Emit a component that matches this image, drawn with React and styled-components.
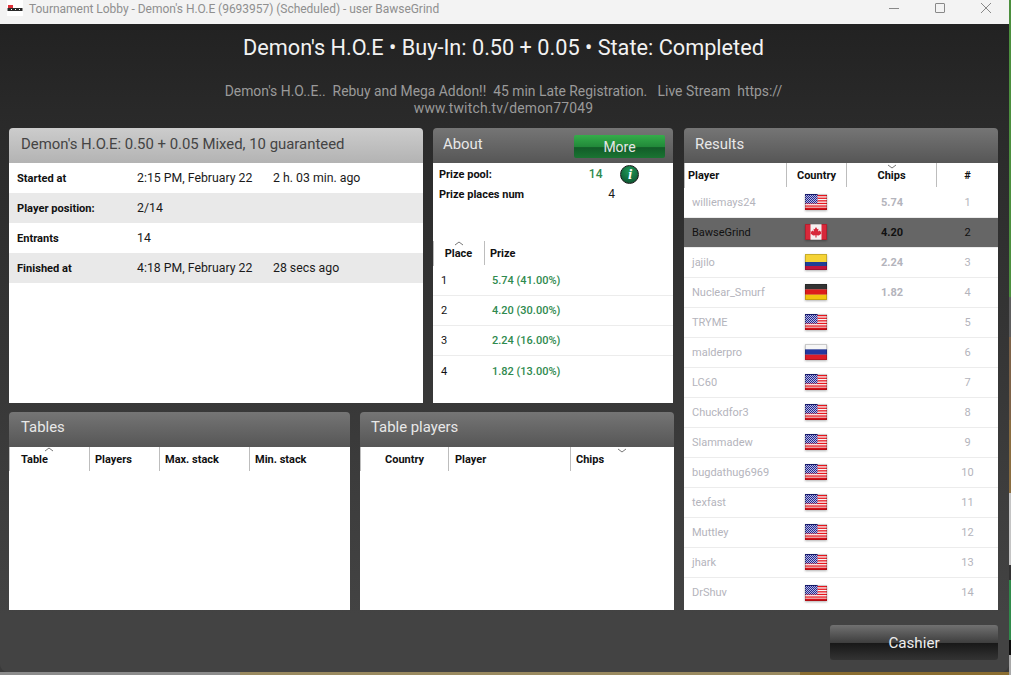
import React from "react";
import styled, { createGlobalStyle } from "styled-components";

const GlobalStyle = createGlobalStyle`
  html, body {
    margin: 0;
    padding: 0;
    background: #3a3a3a;
  }
  body {
    font-family: Roboto, "Liberation Sans", sans-serif;
  }
  * {
    box-sizing: border-box;
  }
`;

const results = [
  { name: "williemays24", flag: "us", chips: "5.74" },
  { name: "BawseGrind", flag: "ca", chips: "4.20", me: true },
  { name: "jajilo", flag: "co", chips: "2.24" },
  { name: "Nuclear_Smurf", flag: "de", chips: "1.82" },
  { name: "TRYME", flag: "us" },
  { name: "malderpro", flag: "ru" },
  { name: "LC60", flag: "us" },
  { name: "Chuckdfor3", flag: "us" },
  { name: "Slammadew", flag: "us" },
  { name: "bugdathug6969", flag: "us" },
  { name: "texfast", flag: "us" },
  { name: "Muttley", flag: "us" },
  { name: "jhark", flag: "us" },
  { name: "DrShuv", flag: "us" },
];

const prizes = [
  { place: 1, prize: "5.74 (41.00%)" },
  { place: 2, prize: "4.20 (30.00%)" },
  { place: 3, prize: "2.24 (16.00%)" },
  { place: 4, prize: "1.82 (13.00%)" },
];

function Flag({ code }) {
  return (
    <FlagBox viewBox="0 0 22 16">
      {code === "us" && (
        <>
          <defs>
            <pattern id="usStars" width="2" height="2" patternUnits="userSpaceOnUse">
              <rect width="2" height="2" fill="#24288f" />
              <rect width="1" height="1" fill="#b9bbe4" />
              <rect x="1" y="1" width="1" height="1" fill="#b9bbe4" />
            </pattern>
          </defs>
          <rect width="22" height="16" fill="#f8f8f8" />
          <rect y="1" width="22" height="1.3" fill="#e8141c" />
          <rect y="3.6" width="22" height="1.3" fill="#e8141c" />
          <rect y="6.2" width="22" height="1.3" fill="#e8141c" />
          <rect y="8.8" width="22" height="1.3" fill="#e8141c" />
          <rect y="11.4" width="22" height="1.3" fill="#e8141c" />
          <rect y="13.6" width="22" height="2.4" fill="#d80f18" />
          <rect width="12.5" height="9.6" fill="url(#usStars)" />
          <rect x="0" y="0" width="12.5" height="1" fill="#1c2080" />
        </>
      )}
      {code === "ca" && (
        <>
          <rect width="22" height="16" fill="#f6f0f0" />
          <rect width="5.5" height="16" fill="#d8283a" />
          <rect x="16.5" width="5.5" height="16" fill="#d8283a" />
          <path d="M11 3l1.3 2.2 1.2-.5-.4 2.8 1.6-1 .4 1 1.4-.2-.5 1.6.6.5-2.8 2.2-2.3-.3.1 2.2h-1.2l.1-2.2-2.3.3-2.8-2.2.6-.5-.5-1.6 1.4.2.4-1 1.6 1-.4-2.8 1.2.5z" fill="#d8283a" />
        </>
      )}
      {code === "co" && (
        <>
          <rect width="22" height="8" fill="#f5d335" />
          <rect y="8" width="22" height="4" fill="#1f3f96" />
          <rect y="12" width="22" height="4" fill="#c0143c" />
        </>
      )}
      {code === "de" && (
        <>
          <rect width="22" height="5.4" fill="#333333" />
          <rect y="5.4" width="22" height="5.3" fill="#dd1c1c" />
          <rect y="10.7" width="22" height="5.3" fill="#f1c40f" />
        </>
      )}
      {code === "ru" && (
        <>
          <rect width="22" height="5.4" fill="#f6f6f6" />
          <rect y="5.4" width="22" height="5.3" fill="#2438a0" />
          <rect y="10.7" width="22" height="5.3" fill="#dc1c28" />
        </>
      )}
      <rect x="0.5" y="0.5" width="21" height="15" fill="none" stroke="#000000" strokeOpacity="0.18" />
    </FlagBox>
  );
}

function SortMark({ down, left }) {
  return (
    <SortIcon viewBox="0 0 10 5" $left={left} $down={down}>
      <path d={down ? "M1 1l4 3 4-3" : "M1 4l4-3 4 3"} />
    </SortIcon>
  );
}

function AppLogo() {
  return (
    <LogoBox viewBox="0 0 16 16">
      <rect width="16" height="16" fill="#ffffff" />
      <rect x="1" y="5" width="5" height="3" fill="#e0343c" />
      <rect x="0.5" y="8" width="15" height="3" fill="#2a2a2a" />
      <rect x="4" y="9" width="1" height="1" fill="#ffffff" />
      <rect x="8" y="9" width="1" height="1" fill="#ffffff" />
      <rect x="12" y="9" width="1" height="1" fill="#ffffff" />
    </LogoBox>
  );
}

export default function App() {
  return (
    <>
      <GlobalStyle />
      <Page>
        <TitleBar>
          <TitleLeft>
            <AppLogo />
            <TitleText>
              Tournament Lobby - Demon's H.O.E (9693957) (Scheduled) - user BawseGrind
            </TitleText>
          </TitleLeft>
          <WindowButtons>
            <WinIcon viewBox="0 0 12 12">
              <path d="M1 6.5h10" />
            </WinIcon>
            <WinIcon viewBox="0 0 12 12">
              <rect x="1.5" y="1.5" width="9" height="9" rx="0.5" />
            </WinIcon>
            <WinIcon viewBox="0 0 12 12">
              <path d="M1 1l10 10M11 1L1 11" />
            </WinIcon>
          </WindowButtons>
        </TitleBar>
        <Body>
          <Heading>Demon's H.O.E • Buy-In: 0.50 + 0.05 • State: Completed</Heading>
          <Description>
            Demon's H.O..E.. &nbsp;Rebuy and Mega Addon!! &nbsp;45 min Late Registration. &nbsp; Live Stream &nbsp;https://
            <br />
            <LinkLine>www.twitch.tv/demon77049</LinkLine>
          </Description>
          <Panels>
            <LeftArea>
              <TopRow>
                <Panel>
                  <PanelHeader $light $pad="12px">
                    Demon's H.O.E: 0.50 + 0.05 Mixed, 10 guaranteed
                  </PanelHeader>
                  <PanelBody>
                    <InfoRow>
                      <InfoLabel>Started at</InfoLabel>
                      <InfoValue>2:15 PM, February 22</InfoValue>
                      <InfoValue>2 h. 03 min. ago</InfoValue>
                    </InfoRow>
                    <InfoRow $shaded>
                      <InfoLabel>Player position:</InfoLabel>
                      <InfoValue>2/14</InfoValue>
                    </InfoRow>
                    <InfoRow>
                      <InfoLabel>Entrants</InfoLabel>
                      <InfoValue>14</InfoValue>
                    </InfoRow>
                    <InfoRow $shaded>
                      <InfoLabel>Finished at</InfoLabel>
                      <InfoValue>4:18 PM, February 22</InfoValue>
                      <InfoValue>28 secs ago</InfoValue>
                    </InfoRow>
                  </PanelBody>
                </Panel>
                <Panel>
                  <PanelHeader $pad="10px">
                    About
                    <MoreButton>More</MoreButton>
                  </PanelHeader>
                  <PanelBody>
                    <AboutList>
                      <AboutRow>
                        <AboutLabel>Prize pool:</AboutLabel>
                        <PoolValue>14</PoolValue>
                        <InfoBadge>i</InfoBadge>
                      </AboutRow>
                      <AboutRow>
                        <AboutLabel>Prize places num</AboutLabel>
                        <PlacesValue>4</PlacesValue>
                      </AboutRow>
                    </AboutList>
                    <PrizeHead>
                      <HeadCell $width="52px" $center>
                        <SortMark />
                        Place
                      </HeadCell>
                      <HeadCell $pad="5px">Prize</HeadCell>
                    </PrizeHead>
                    {prizes.map((p) => (
                      <PrizeRow key={p.place}>
                        <PlaceCell>{p.place}</PlaceCell>
                        <PrizeCell>{p.prize}</PrizeCell>
                      </PrizeRow>
                    ))}
                  </PanelBody>
                </Panel>
              </TopRow>
              <BottomRow>
                <Panel>
                  <PanelHeader $pad="12px" $lift>Tables</PanelHeader>
                  <PanelBody>
                    <TableHead>
                      <HeadCell $width="81px" $pad="12px">
                        <SortMark />
                        Table
                      </HeadCell>
                      <HeadCell $width="70px" $pad="5px">Players</HeadCell>
                      <HeadCell $width="90px" $pad="5px">Max. stack</HeadCell>
                      <HeadCell $pad="5px">Min. stack</HeadCell>
                    </TableHead>
                  </PanelBody>
                </Panel>
                <Panel>
                  <PanelHeader $pad="11px" $lift>Table players</PanelHeader>
                  <PanelBody>
                    <TableHead>
                      <HeadCell $width="89px" $pad="25px">Country</HeadCell>
                      <HeadCell $width="122px" $pad="6px">Player</HeadCell>
                      <HeadCell $pad="5px">
                        <SortMark down left="46px" />
                        Chips
                      </HeadCell>
                    </TableHead>
                  </PanelBody>
                </Panel>
              </BottomRow>
            </LeftArea>
            <Panel>
              <PanelHeader $pad="11px">Results</PanelHeader>
              <PanelBody>
                <ResultsHead>
                  <HeadCell $pad="4px">Player</HeadCell>
                  <HeadCell $center>Country</HeadCell>
                  <HeadCell $center>
                    <SortMark down />
                    Chips
                  </HeadCell>
                  <HeadCell $center>#</HeadCell>
                </ResultsHead>
                {results.map((r, i) => (
                  <ResultRow key={r.name} $me={r.me}>
                    <PlayerName>{r.name}</PlayerName>
                    <FlagCell>
                      <Flag code={r.flag} />
                    </FlagCell>
                    <ChipsCell>{r.chips}</ChipsCell>
                    <RankCell>{i + 1}</RankCell>
                  </ResultRow>
                ))}
              </PanelBody>
            </Panel>
          </Panels>
          <Footer>
            <CashierButton>Cashier</CashierButton>
          </Footer>
        </Body>
      </Page>
    </>
  );
}

const Page = styled.div`
  width: 1011px;
  height: 675px;
  overflow: hidden;
  padding-right: 2px;
  background:
    linear-gradient(
        #4c8f3e 0 297px,
        #5e5e5e 297px 337px,
        #7d6248 337px 420px,
        #8a6d40 420px 493px,
        #c4c4c4 493px 565px,
        #333333 565px 580px,
        #2f8a4a 580px 640px,
        #0c0c0c 640px 655px,
        #a8a8a8 655px
      )
      right top / 2px 100% no-repeat,
    linear-gradient(to right, #8c8c8c 0 240px, #9a8a60 240px 800px, #8a6d30 800px)
      left bottom / 100% 3px no-repeat,
    #3a3a3a;
`;

const TitleBar = styled.div`
  height: 24px;
  background: #f3f3f3;
  display: flex;
  align-items: flex-start;
  justify-content: space-between;
`;

const TitleLeft = styled.div`
  display: flex;
  align-items: flex-start;
  padding-left: 7px;
  gap: 6px;
`;

const LogoBox = styled.svg`
  width: 16px;
  height: 16px;
`;

const TitleText = styled.span`
  font-size: 12px;
  line-height: 18px;
  letter-spacing: -0.03px;
  color: #8f8f8f;
  white-space: nowrap;
`;

const WindowButtons = styled.div`
  display: flex;
  gap: 34px;
  padding: 2px 17px 0 0;
`;

const WinIcon = styled.svg`
  width: 12px;
  height: 12px;
  fill: none;
  stroke: #888888;
  stroke-width: 1;
`;

const Body = styled.div`
  height: 648px;
  background: linear-gradient(#222222 0, #2a2a2a 100px, #434343 590px);
  border-radius: 0 0 8px 8px;
  padding: 0 11px 0 9px;
`;

const Heading = styled.div`
  padding-top: 9px;
  height: 46px;
  font-size: 21.7px;
  line-height: 29px;
  color: #f2f2f2;
  text-align: center;
`;

const Description = styled.div`
  height: 58px;
  padding-top: 13px;
  font-size: 13.9px;
  line-height: 17px;
  color: #9a9a9a;
  text-align: center;
`;

const LinkLine = styled.span`
  letter-spacing: 0.2px;
`;

const Panels = styled.div`
  display: grid;
  grid-template-columns: 665px 314px;
  gap: 10px;
  height: 482px;
`;

const LeftArea = styled.div`
  display: grid;
  grid-template-rows: 275px 198px;
  gap: 9px;
`;

const TopRow = styled.div`
  display: grid;
  grid-template-columns: 414px 240px;
  gap: 10px;
`;

const BottomRow = styled.div`
  display: grid;
  grid-template-columns: 341px 314px;
  gap: 10px;
`;

const Panel = styled.section`
  display: flex;
  flex-direction: column;
  min-width: 0;
`;

const PanelHeader = styled.header`
  height: 35px;
  flex: none;
  position: relative;
  display: flex;
  align-items: center;
  padding: 0 ${(p) => p.$pad} ${(p) => (p.$lift ? "5px" : "3px")};
  font-size: 14.9px;
  border-radius: 4px 4px 0 0;
  color: ${(p) => (p.$light ? "#444444" : "#e8e8e8")};
  background: ${(p) =>
    p.$light
      ? "linear-gradient(#cccccc, #b3b3b3)"
      : "linear-gradient(#757575, #565656)"};
`;

const PanelBody = styled.div`
  flex: 1;
  background: #ffffff;
  min-height: 0;
`;

const InfoRow = styled.div`
  display: grid;
  grid-template-columns: 120px 136px 1fr;
  align-items: center;
  height: 30px;
  padding-left: 8px;
  background: ${(p) => (p.$shaded ? "#e9e9e9" : "#ffffff")};
`;

const InfoLabel = styled.span`
  font-size: 11.1px;
  font-weight: 700;
  color: #111111;
`;

const InfoValue = styled.span`
  font-size: 12.3px;
  color: #1a1a1a;
`;

const MoreButton = styled.button`
  position: absolute;
  top: 7px;
  right: 8px;
  width: 91px;
  height: 23px;
  border: 0;
  border-radius: 2px;
  padding: 0;
  font-family: inherit;
  font-size: 14px;
  color: #e6e6e6;
  background: linear-gradient(#35ad4a 0, #228a3a 50%, #125c28 55%, #1a7432 100%);
`;

const AboutList = styled.div`
  padding-top: 1px;
`;

const AboutRow = styled.div`
  height: 20px;
  display: flex;
  align-items: center;
  padding-left: 6px;
`;

const AboutLabel = styled.span`
  font-size: 11px;
  font-weight: 700;
  color: #111111;
`;

const PoolValue = styled.span`
  margin-left: 97px;
  font-size: 12px;
  font-weight: 500;
  color: #2f8a4f;
`;

const InfoBadge = styled.span`
  margin-left: 18px;
  width: 19px;
  height: 19px;
  border-radius: 50%;
  border: 1px solid #1a1a1a;
  background: radial-gradient(circle at 50% 30%, #1f9a58, #0a4a2a);
  color: #ffffff;
  font-family: "Liberation Serif", serif;
  font-style: italic;
  font-weight: 700;
  font-size: 15px;
  line-height: 17px;
  text-align: center;
`;

const PlacesValue = styled.span`
  margin-left: 84px;
  font-size: 12px;
  color: #1a1a1a;
`;

const PrizeHead = styled.div`
  display: flex;
  height: 25px;
  margin-top: 37px;
  padding-bottom: 1px;
  box-shadow: inset 1px 0 0 #bdbdbd;
`;

const HeadCell = styled.div`
  position: relative;
  display: flex;
  align-items: center;
  justify-content: ${(p) => (p.$center ? "center" : "flex-start")};
  width: ${(p) => p.$width || "auto"};
  flex: ${(p) => (p.$width ? "none" : "1")};
  padding-left: ${(p) => p.$pad || "0"};
  font-size: 11px;
  font-weight: 700;
  color: #111111;
  border-right: 1px solid #bdbdbd;
  &:last-child {
    border-right: 0;
  }
`;

const SortIcon = styled.svg`
  position: absolute;
  top: ${(p) => (p.$down ? "1px" : "0")};
  left: ${(p) => p.$left || "50%"};
  margin-left: ${(p) => (p.$left ? "0" : "-5px")};
  width: 10px;
  height: 5px;
  fill: none;
  stroke: #777777;
  stroke-width: 1;
`;

const PrizeRow = styled.div`
  display: flex;
  align-items: center;
  height: 30px;
  padding-left: 8px;
  border-bottom: 1px solid #ececec;
  &:last-child {
    border-bottom: 0;
  }
`;

const PlaceCell = styled.span`
  width: 51px;
  font-size: 11px;
  color: #111111;
`;

const PrizeCell = styled.span`
  font-size: 11px;
  font-weight: 500;
  color: #2f8a4f;
`;

const TableHead = styled.div`
  display: flex;
  height: 24px;
  box-shadow: inset 1px 0 0 #bdbdbd;
`;

const ResultsHead = styled.div`
  display: grid;
  grid-template-columns: 103px 60px 90px 1fr;
  height: 25px;
  padding-bottom: 1px;
  box-shadow: inset 1px 0 0 #bdbdbd;
`;

const ResultRow = styled.div`
  display: grid;
  grid-template-columns: 103px 60px 90px 1fr;
  align-items: center;
  height: 30px;
  padding-bottom: 1px;
  border-bottom: 1px solid #ececec;
  color: ${(p) => (p.$me ? "#111111" : "#b4b4bc")};
  background: ${(p) => (p.$me ? "#666666" : "#ffffff")};
  &:last-child {
    border-bottom: 0;
  }
`;

const PlayerName = styled.span`
  padding-left: 8px;
  font-size: 11px;
  white-space: nowrap;
`;

const FlagCell = styled.span`
  display: flex;
  justify-content: center;
  padding-right: 2px;
`;

const FlagBox = styled.svg`
  width: 22px;
  height: 16px;
  filter: drop-shadow(0 1px 1px rgba(0, 0, 0, 0.3));
`;

const ChipsCell = styled.span`
  font-size: 11px;
  font-weight: 700;
  text-align: center;
`;

const RankCell = styled.span`
  font-size: 11px;
  text-align: center;
`;

const Footer = styled.div`
  display: flex;
  justify-content: flex-end;
  padding-top: 15px;
`;

const CashierButton = styled.button`
  width: 168px;
  height: 35px;
  border: 0;
  border-radius: 3px;
  padding: 1px 0 0;
  font-family: inherit;
  font-size: 15.2px;
  color: #eeeeee;
  background: linear-gradient(#717171 0, #3f3f3f 50%, #181818 52%, #333333 100%);
`;
